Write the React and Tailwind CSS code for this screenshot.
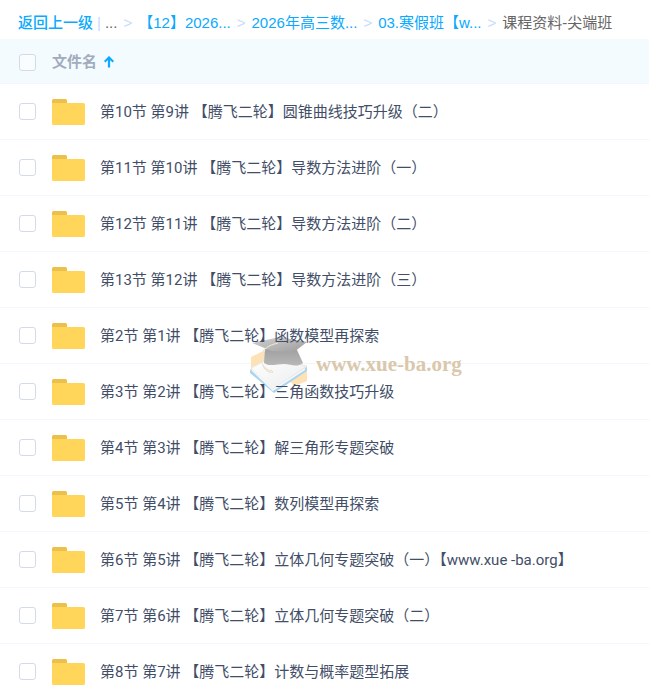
import { useState } from 'react'

const crumbs = ['...', '【12】2026...', '2026年高三数...', '03.寒假班【w...']

const files = [
  '第10节 第9讲 【腾飞二轮】圆锥曲线技巧升级（二）',
  '第11节 第10讲 【腾飞二轮】导数方法进阶（一）',
  '第12节 第11讲 【腾飞二轮】导数方法进阶（二）',
  '第13节 第12讲 【腾飞二轮】导数方法进阶（三）',
  '第2节 第1讲 【腾飞二轮】函数模型再探索',
  '第3节 第2讲 【腾飞二轮】三角函数技巧升级',
  '第4节 第3讲 【腾飞二轮】解三角形专题突破',
  '第5节 第4讲 【腾飞二轮】数列模型再探索',
  '第6节 第5讲 【腾飞二轮】立体几何专题突破（一）【www.xue -ba.org】',
  '第7节 第6讲 【腾飞二轮】立体几何专题突破（二）',
  '第8节 第7讲 【腾飞二轮】计数与概率题型拓展',
]

function Checkbox({ label, checked, onChange }) {
  return (
    <input
      type="checkbox"
      aria-label={label}
      checked={checked}
      onChange={onChange}
      className="block w-[17px] h-[17px] appearance-none rounded-[3px] border border-[#d3dce6] bg-white/60 checked:border-[#09aaff] checked:bg-[#09aaff]"
    />
  )
}

function FolderIcon() {
  return (
    <svg viewBox="0 0 33 26" className="block w-[33px] h-[26px]" aria-hidden="true">
      <path d="M0 1.5A1.5 1.5 0 0 1 1.5 0H13.5A1.5 1.5 0 0 1 15 1.5V6H0Z" fill="#ecc04b" />
      <path d="M0 4H31.5A1.5 1.5 0 0 1 33 5.5V24.5A1.5 1.5 0 0 1 31.5 26H1.5A1.5 1.5 0 0 1 0 24.5Z" fill="#ffd659" />
    </svg>
  )
}

function SortArrow() {
  return (
    <svg viewBox="0 0 10 12" className="w-[10px] h-3" fill="none" stroke="#09aaff" strokeWidth="2.2" aria-hidden="true">
      <path d="M5 11.5V1.5M0.7 5.8L5 1.5L9.3 5.8" />
    </svg>
  )
}

function Watermark() {
  return (
    <div className="pointer-events-none absolute left-[250px] top-[335px] flex items-center gap-2">
      <svg viewBox="0 0 58 58" className="w-[58px] h-[58px]" aria-hidden="true">
        <defs>
          <linearGradient id="cap" x1="0" y1="0" x2="1" y2="1">
            <stop offset="0" stopColor="#d2d2d2" />
            <stop offset="1" stopColor="#9c9c9c" />
          </linearGradient>
          <linearGradient id="skull" x1="0" y1="0" x2="0" y2="1">
            <stop offset="0" stopColor="#a0a0a0" />
            <stop offset="1" stopColor="#b8b8b8" />
          </linearGradient>
          <linearGradient id="page" x1="0" y1="0" x2="1" y2="1">
            <stop offset="0" stopColor="#ffffff" />
            <stop offset="1" stopColor="#ebecee" />
          </linearGradient>
        </defs>
        <path d="M1 22L13 16L28 22L57 31V46L45 51L26 34L1 37Z" fill="#fee2b5" />
        <path d="M0 34L23 54L57 32V36L24 58L0 38Z" fill="#a9d5ef" />
        <path d="M1 33L20 23L57 31L23 54Z" fill="url(#page)" stroke="#e2e4e6" strokeWidth="0.7" />
        <path d="M2 35L23 55L55 34" fill="none" stroke="#f7f7f7" strokeWidth="1.5" />
        <path d="M15 14L47 15L53 28C46 33 41 29 34 29C26 29 20 32 14 28Z" fill="url(#skull)" />
        <path d="M2 8L30 2L57 7L44 17L22 16Z" fill="url(#cap)" />
        <path d="M28 8C19 10 12 14 11 22C11 28 14 34 21 36" fill="none" stroke="#ebe4d2" strokeWidth="1.2" />
        <path d="M13 31C16 36 19 38 23 37L21 35" fill="none" stroke="#e2d7bb" strokeWidth="0.9" />
      </svg>
      <span className="font-['Liberation_Serif',serif] text-[21px] font-bold leading-6 text-[#dac8ac]">www.xue-ba.org</span>
    </div>
  )
}

export default function App() {
  const [selected, setSelected] = useState([])

  const toggle = (name) =>
    setSelected((prev) => (prev.includes(name) ? prev.filter((n) => n !== name) : [...prev, name]))

  const allSelected = selected.length === files.length

  return (
    <main
      lang="zh-CN"
      className="relative w-full overflow-hidden bg-white font-['Roboto','Noto_Sans_CJK_SC',sans-serif] text-[15px] leading-5 text-[#424e67]"
    >
      <nav className="flex h-[39px] items-center whitespace-nowrap pl-[18px] pt-[6px] font-['Liberation_Sans','Noto_Sans_CJK_SC',sans-serif] text-[#09aaff]">
        <a href="#back" className="font-medium">返回上一级</a>
        <span className="mx-1 text-[#c4dbfe]">|</span>
        {crumbs.map((crumb, i) => (
          <span key={crumb} className="flex">
            {i === 0 ? <span className="text-[#666]">{crumb}</span> : <a href={`#${i}`}>{crumb}</a>}
            <span className="mx-[6px] text-[#c4dbfe]">&gt;</span>
          </span>
        ))}
        <span className="text-[#666]">课程资料-尖端班</span>
      </nav>

      <table className="w-full border-separate border-spacing-0">
        <thead>
          <tr className="h-[45px] bg-[#f3fbff] *:border-b *:border-[#f2f6fd] *:pt-[2px]">
            <th className="w-[52px] pl-[19px]">
              <Checkbox
                label="全选"
                checked={allSelected}
                onChange={() => setSelected(allSelected ? [] : files)}
              />
            </th>
            <th colSpan={2} className="text-left font-bold text-[#a2abbd]">
              <button className="flex items-center gap-[7px]">
                文件名
                <SortArrow />
              </button>
            </th>
          </tr>
        </thead>
        <tbody>
          {files.map((name) => (
            <tr key={name} className="h-14 *:border-b *:border-[#f2f6fd]">
              <td className="w-[52px] pl-[19px]">
                <Checkbox label={name} checked={selected.includes(name)} onChange={() => toggle(name)} />
              </td>
              <td className="w-12">
                <FolderIcon />
              </td>
              <td className="whitespace-nowrap">
                {/* keeps the name readable above the watermark */}
                <span className="relative z-10">{name}</span>
              </td>
            </tr>
          ))}
        </tbody>
      </table>

      <Watermark />
    </main>
  )
}
